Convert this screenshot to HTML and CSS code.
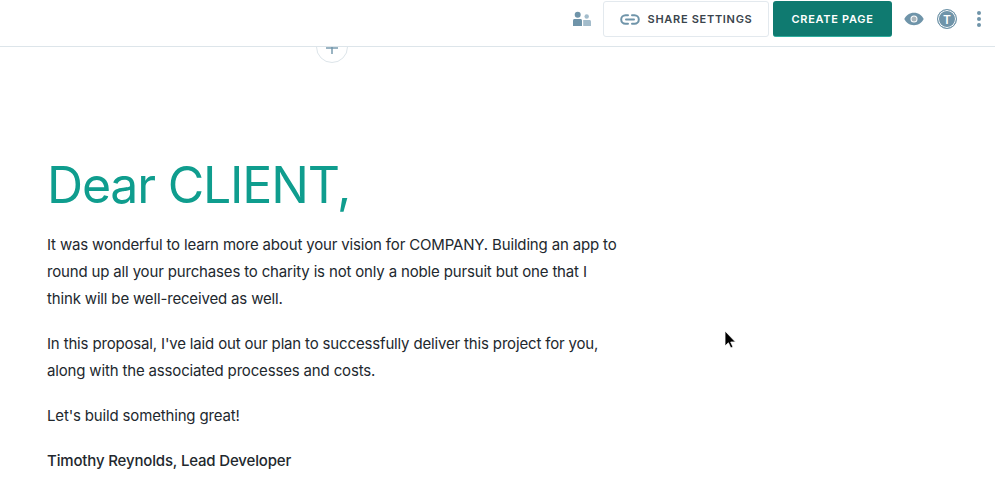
FILE: index.html
```html
<!DOCTYPE html>
<html>
<head>
    <link rel="stylesheet" href="styles.css">
</head>
<body>
    <div class="topbar">
        <svg class="icon-people" width="20" height="16" viewBox="0 0 20 16">
            <circle cx="6.700" cy="3.700" r="3" fill="#6f94a9"></circle>
            <path d="M2 15V9.500C2 8.600 2.600 8 3.500 8h6C10.400 8 11 8.600 11 9.500V15z" fill="#6f94a9"></path>
            <circle cx="15.700" cy="5.500" r="2.200" fill="#a3bccb"></circle>
            <path d="M12.200 15V9h6.300c.9 0 1.500.6 1.500 1.500V15z" fill="#a3bccb"></path>
        </svg>
        <button class="btn btn-share">
            <svg width="20" height="11" viewBox="0 0 20 11" fill="none" stroke="#6f94a9" stroke-width="2" stroke-linecap="round">
                <path d="M8 1.200H5.500a4.300 4.300 0 0 0 0 8.600H8"></path>
                <path d="M12 1.200h2.500a4.300 4.300 0 0 1 0 8.600H12"></path>
                <line x1="6" y1="5.500" x2="14" y2="5.500"></line>
            </svg>
            <span>SHARE SETTINGS</span>
        </button>
        <button class="btn btn-create">CREATE PAGE</button>
        <svg class="icon-eye" width="20" height="14" viewBox="0 0 20 14">
            <path fill-rule="evenodd" d="M10 0.800C5.500 0.800 2 3.500 0.300 7 2 10.500 5.500 13.200 10 13.200S18 10.500 19.700 7C18 3.500 14.500 0.800 10 0.800zM10 3.500a3.500 3.500 0 1 1 0 7 3.500 3.500 0 0 1 0-7z" fill="#6f94a9"></path>
            <circle cx="10" cy="7" r="2.500" fill="#a9b4ba"></circle>
        </svg>
        <div class="avatar"><span>T</span></div>
        <div class="dots"><i></i><i></i><i></i></div>
    </div>

    <div class="add-wrap">
        <div class="add-btn">
            <svg width="14" height="14" viewBox="0 0 14 14" stroke="#6f94a9" stroke-width="1.400">
                <line x1="7" y1="0" x2="7" y2="7"></line>
                <line x1="1" y1="1" x2="13" y2="1"></line>
            </svg>
        </div>
    </div>

    <div class="content">
        <h1>Dear CLIENT,</h1>
        <p>It was wonderful to learn more about your vision for COMPANY. Building an app to round up all your purchases to charity is not only a noble pursuit but one that I think will be well-received as well.</p>
        <p>In this proposal, I've laid out our plan to successfully deliver this project for you, along with the associated processes and costs.</p>
        <p>Let's build something great!</p>
        <p class="sign">Timothy Reynolds, Lead Developer</p>
    </div>

    <svg class="cursor" width="14" height="20" viewBox="0 0 14 20">
        <path d="M2 1V16L5.400 12.800 7.800 18 10 17 7.700 12H12.500z" fill="#000" stroke="#fff" stroke-width="0.800"></path>
    </svg>
</body>
</html>
```

FILE: styles.css
```css
html, body {
    height: 100%;
}

body {
    margin: 0;
    background: #fff;
    color: #22282e;
    font-family: Inter, "Liberation Sans", sans-serif;
    overflow: hidden;
}

.topbar {
    height: 47px;
    box-sizing: border-box;
    border-bottom: 1px solid #dde5ea;
    display: flex;
    align-items: center;
    justify-content: flex-end;
    padding: 1px 14px 9px 0;
    position: relative;
    z-index: 1;
    background: #fff;
}

.icon-people {
    margin-right: 12px;
}

.btn {
    height: 36px;
    box-sizing: border-box;
    border-radius: 3px;
    font-family: Inter, "Liberation Sans", sans-serif;
    font-size: 11px;
    font-weight: 600;
    letter-spacing: 0.700px;
    display: flex;
    align-items: center;
    justify-content: center;
    padding: 0;
}

.btn-share {
    width: 166px;
    background: #fff;
    border: 1px solid #e3e9ee;
    color: #3a444c;
    gap: 8px;
}

.btn-create {
    width: 119px;
    margin-left: 4px;
    background: #0f7a70;
    border: none;
    border-bottom: 1px solid #2fae9f;
    color: #fff;
}

.icon-eye {
    margin-left: 12px;
}

.avatar {
    width: 20px;
    height: 20px;
    margin-left: 13px;
    box-sizing: border-box;
    border-radius: 50%;
    border: 1.500px solid #6f94a9;
    background: #6f94a9;
    box-shadow: inset 0 0 0 1px #fff;
    color: #fff;
    font-size: 12px;
    font-weight: 600;
    display: flex;
    align-items: center;
    justify-content: center;
}

.dots {
    margin-left: 20px;
    display: flex;
    flex-direction: column;
    gap: 2px;
}

.dots i {
    display: block;
    width: 4px;
    height: 4px;
    border-radius: 50%;
    background: #6f94a9;
}

.add-wrap {
    height: 0;
    padding-left: 316px;
}

.add-btn {
    width: 32px;
    height: 32px;
    box-sizing: border-box;
    margin-top: -16px;
    border: 1px solid #dde5ea;
    border-radius: 50%;
    background: #fff;
    display: flex;
    justify-content: center;
    padding-top: 15px;
}

.content {
    width: 572px;
    padding: 112px 0 0 47px;
}

h1 {
    margin: 0 0 16px;
    padding-top: 12px;
    color: #0f9d8e;
    font-size: 50px;
    font-weight: 400;
    line-height: 60px;
    letter-spacing: -1.200px;
}

p {
    margin: 0 0 18px;
    font-size: 15px;
    line-height: 27px;
    letter-spacing: -0.160px;
}

.sign {
    font-weight: 500;
}

.cursor {
    position: absolute;
    left: 723px;
    top: 330px;
}
```
